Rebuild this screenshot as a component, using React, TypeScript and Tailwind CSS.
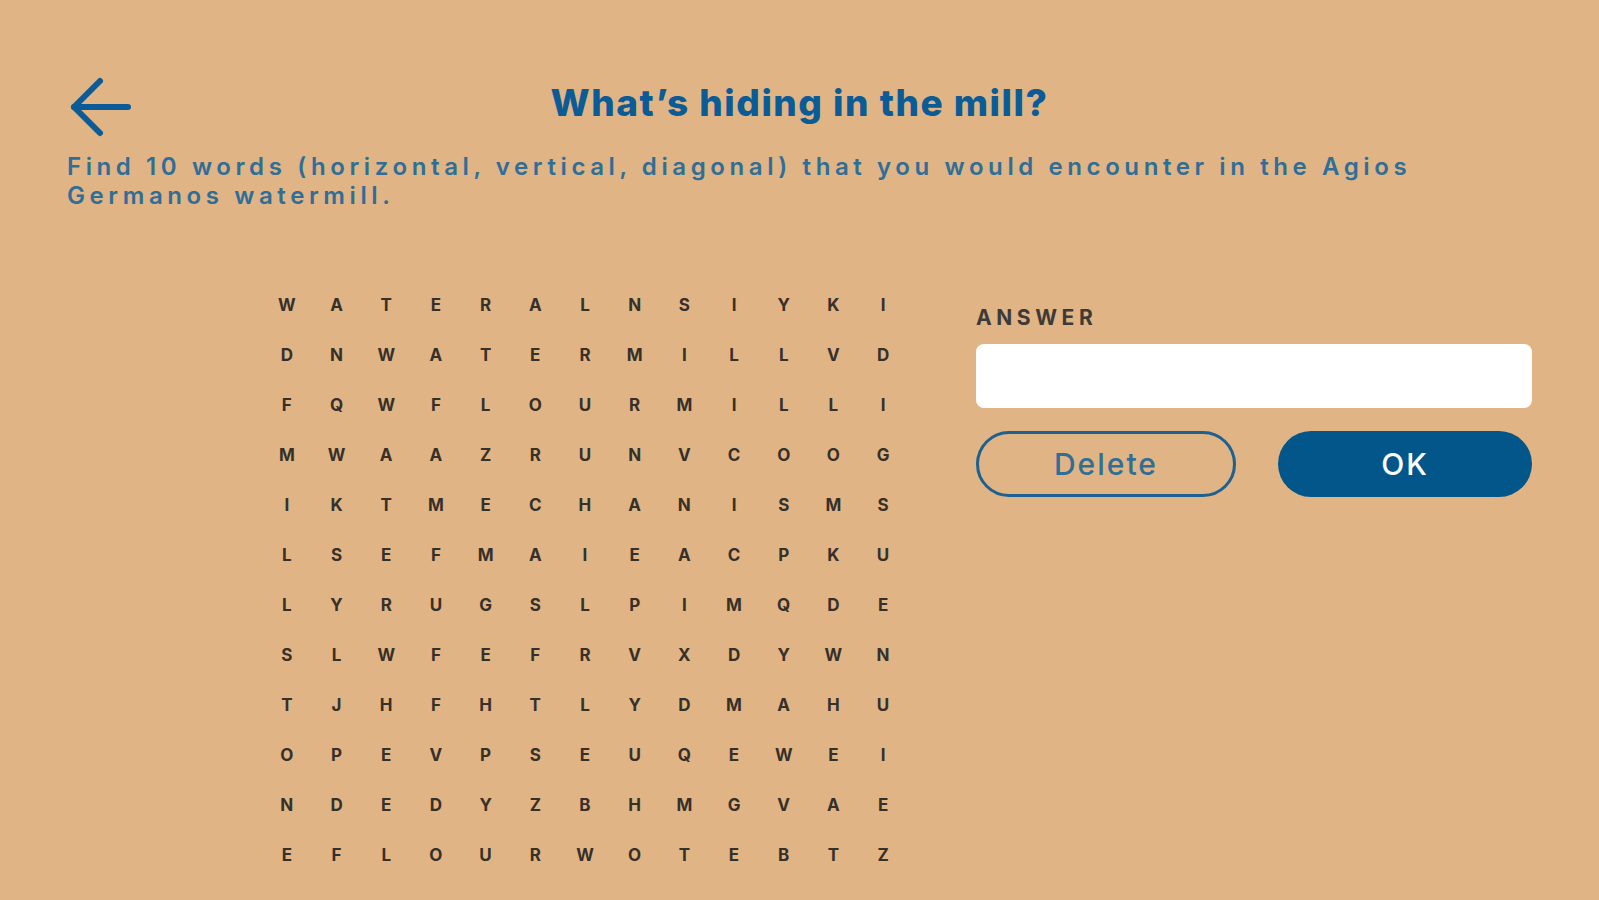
import { useState } from "react";

const rows = [
  "WATERALNSIYKI",
  "DNWATERMILLVD",
  "FQWFLOURMILLI",
  "MWAAZRUNVCOOG",
  "IKTMECHANISMS",
  "LSEFMAIEACPKU",
  "LYRUGSLPIMQDE",
  "SLWFEFRVXDYWN",
  "TJHFHTLYDMAHU",
  "OPEVPSEUQEWEI",
  "NDEDYZBHMGVAE",
  "EFLOURWOTEBTZ"
];

function BackArrow() {
  return (
    <svg width="64" height="64" viewBox="0 0 64 64" fill="none" stroke="#0b5b96" strokeWidth="6" strokeLinecap="round" strokeLinejoin="round">
      <path d="M60 32H6" />
      <path d="M32 6 6 32l26 26" />
    </svg>
  );
}

export default function App() {
  const [answer, setAnswer] = useState("");

  return (
    <div className="min-h-screen w-full bg-[#e0b484] font-['Inter','Noto_Sans',sans-serif] px-[67px] pt-[75px]">
      <div className="grid grid-cols-[1fr_auto_1fr] items-center">
        <button className="justify-self-start ml-[1px]">
          <BackArrow />
        </button>
        <h1 className="text-[37px] leading-none font-extrabold text-[#0b5b96] tracking-[1.5px] -mt-[9px]">
          What’s hiding in the mill?
        </h1>
        <div />
      </div>

      <p className="mt-[13px] text-[24px] leading-[29px] font-semibold text-[#2e6e98] tracking-[4.6px] whitespace-nowrap">
        Find 10 words (horizontal, vertical, diagonal) that you would encounter in the Agios
        <br />
        Germanos watermill.
      </p>

      <div className="flex items-start mt-[71px] pl-[195px]">
        <div className="grid grid-cols-[repeat(13,49.7px)]">
          {rows.map((row, r) =>
            row.split("").map((ch, c) => (
              <div key={r + "-" + c} className="h-[50px] flex items-center justify-center text-[17px] font-bold text-[#36302a]">
                {ch}
              </div>
            ))
          )}
        </div>

        <div className="ml-[68px] mt-[25px] w-[557px]">
          <div className="text-[21px] leading-[24px] font-bold text-[#3d3a37] tracking-[4.6px]">ANSWER</div>
          <input
            value={answer}
            onChange={({ target: { value } }) => setAnswer(value)}
            className="mt-[14px] block w-full h-[64px] rounded-[8px] bg-white px-4 text-[22px] outline-none"
          />
          <div className="mt-[23px] flex gap-[42px]">
            <button
              onClick={() => setAnswer("")}
              className="flex-1 h-[66px] rounded-full border-[3px] border-[#1d6190] text-[30px] font-medium text-[#2f6e97] tracking-[2px]"
            >
              Delete
            </button>
            <button className="flex-1 h-[66px] rounded-full bg-[#02568a] text-[30px] font-medium text-white tracking-[2px]">
              OK
            </button>
          </div>
        </div>
      </div>
    </div>
  );
}
